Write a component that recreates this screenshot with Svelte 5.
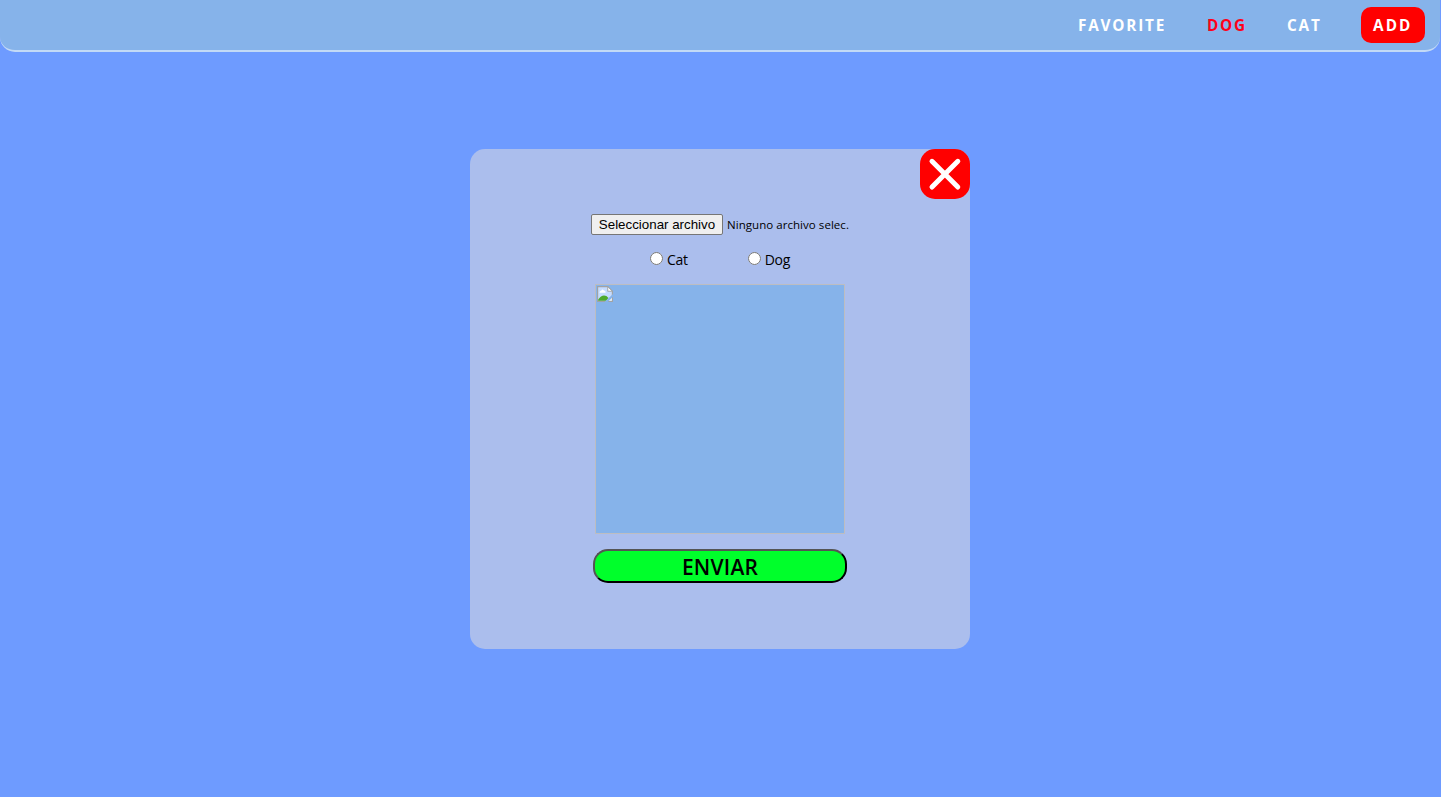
<script>
  let kind = $state('');
</script>

<div class="page">
  <header>
    <nav>
      <a class="favorite" href="#favorite">FAVORITE</a>
      <a class="dog" href="#dog">DOG</a>
      <a class="cat" href="#cat">CAT</a>
      <a class="add" href="#add">ADD</a>
    </nav>
  </header>

  <main>
    <section class="modal">
      <button class="close" aria-label="Cerrar">
        <svg viewBox="0 0 50 50" width="50" height="50">
          <path d="M12 12.3 37.8 38M37.8 12.3 12 38" fill="none" stroke="#fff" stroke-width="5" stroke-linecap="round" />
        </svg>
      </button>
      <form onsubmit={(e) => e.preventDefault()}>
        <div class="file">
          <button type="button" class="pick">Seleccionar archivo</button>
          <span class="none">Ninguno archivo selec.</span>
        </div>
        <div class="kinds">
          <label><input type="radio" name="kind" value="cat" bind:group={kind} /><span>Cat</span></label>
          <label><input type="radio" name="kind" value="dog" bind:group={kind} /><span>Dog</span></label>
        </div>
        <div class="preview">
          <svg viewBox="0 0 16 16" width="16" height="16">
            <path d="M0 0H11L16 5V16H0Z" fill="#a0a3a6" />
            <path d="M1.2 1.2H10.5V5.5H14.8V14.8H1.2Z" fill="#c6dcff" />
            <path d="M10.8 .8V5.2H15.2Z" fill="#fff" stroke="#a0a3a6" stroke-width=".8" />
            <path d="M2.5 6.8q0-2 1.7-2Q5.2 2.2 7 4.6q1.8.1 1.6 2.2Z" fill="#fff" />
            <path d="M1.2 14.8V13.4Q4 9.6 7 9.6q2.5 0 4.5 2.4L9 14.8Z" fill="#4faa2c" />
            <path d="M11.5 14.8 14.8 11.5v3.3Z" fill="#edf3f5" />
            <path d="M7.5 16 16 8V10.8L10.8 16Z" fill="#86b3ea" />
          </svg>
        </div>
        <button class="send"><span>ENVIAR</span></button>
      </form>
    </section>
  </main>
</div>

<style>
  :global(body) {
    margin: 0;
    background: #6e9bff;
  }
  .page {
    box-sizing: border-box;
    width: 1440px;
    height: 797px;
    font-family: "Open Sans", sans-serif;
  }
  header {
    box-sizing: border-box;
    height: 52px;
    padding: 7px 15px 0 0;
    background: #86b3ea;
    border-bottom: 2px solid #c3daf6;
    border-radius: 0 0 15px 15px;
  }
  nav {
    display: flex;
    justify-content: flex-end;
    height: 36px;
  }
  a {
    box-sizing: border-box;
    padding-left: 1px;
    color: #fff;
    font: 700 15.3px/37px "Open Sans", sans-serif;
    letter-spacing: 1.8px;
    text-decoration: none;
    white-space: nowrap;
  }
  .favorite {
    width: 129px;
  }
  .dog {
    width: 81px;
    color: #ff0019;
  }
  .cat {
    width: 74px;
    padding-left: 0;
  }
  .add {
    width: 64px;
    height: 36px;
    padding-left: 12px;
    background: #f00;
    border-radius: 10px;
    letter-spacing: 2.1px;
  }
  main {
    display: flex;
    justify-content: center;
    padding-top: 97px;
  }
  .modal {
    display: flex;
    flex-direction: column;
    width: 500px;
    height: 500px;
    background: #abbeed;
    border-radius: 15px;
  }
  .close {
    align-self: flex-end;
    width: 50px;
    height: 50px;
    padding: 0;
    background: #f00;
    border: 0;
    border-radius: 15px;
  }
  .close svg {
    display: block;
  }
  form {
    display: flex;
    flex-direction: column;
    align-items: center;
    padding-top: 15px;
  }
  .file {
    display: flex;
    gap: 4px;
    width: 258px;
    height: 21px;
  }
  .pick {
    box-sizing: border-box;
    flex: none;
    width: 132px;
    height: 21px;
    padding: 0;
    color: #000;
    background: #efefef;
    border: 1px solid #767676;
    border-radius: 2px;
    font: 13.333px/18px "Liberation Sans", Arial, sans-serif;
    white-space: nowrap;
  }
  .none {
    font: 11.5px/22px "Open Sans", sans-serif;
    letter-spacing: 0.05px;
    white-space: nowrap;
  }
  .kinds {
    display: flex;
    gap: 60px;
    height: 20px;
    margin-top: 14px;
  }
  label {
    display: flex;
    align-items: flex-start;
    gap: 4px;
    font: 14px/22px "Open Sans", sans-serif;
    letter-spacing: -0.3px;
  }
  input {
    width: 13px;
    height: 13px;
    margin: 3px 0 0;
  }
  .preview {
    box-sizing: border-box;
    width: 250px;
    height: 250px;
    margin-top: 15px;
    padding: 1px;
    background: #86b3ea;
    border: 1px solid #bdbdc1;
  }
  .preview svg {
    display: block;
  }
  .send {
    box-sizing: border-box;
    width: 254px;
    height: 34px;
    margin-top: 15px;
    padding: 0;
    color: #000;
    background: #00ff2b;
    border: 2px outset #000;
    border-radius: 15px;
    font: 600 21px/33px "Open Sans", sans-serif;
    letter-spacing: 0.2px;
  }
  .send span {
    display: block;
    height: 30px;
  }
</style>
